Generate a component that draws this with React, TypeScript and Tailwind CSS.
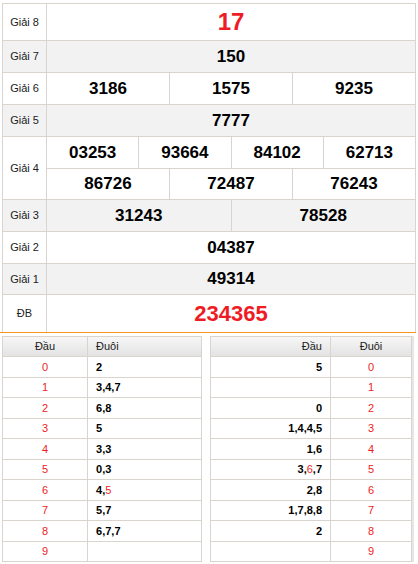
const RED = "text-[#ee1c25]";

type Row = { label: string; lines: string[][]; alt?: boolean; h: string; big?: string };

const rows: Row[] = [
  { label: "Giải 8", lines: [["17"]], h: "h-[37px]", big: "text-[24px]" },
  { label: "Giải 7", lines: [["150"]], alt: true, h: "h-[32px]" },
  { label: "Giải 6", lines: [["3186", "1575", "9235"]], h: "h-[32px]" },
  { label: "Giải 5", lines: [["7777"]], alt: true, h: "h-[32px]" },
  { label: "Giải 4", lines: [["03253", "93664", "84102", "62713"], ["86726", "72487", "76243"]], h: "h-[63px]" },
  { label: "Giải 3", lines: [["31243", "78528"]], alt: true, h: "h-[32px]" },
  { label: "Giải 2", lines: [["04387"]], h: "h-[32px]" },
  { label: "Giải 1", lines: [["49314"]], alt: true, h: "h-[31px]" },
];

// [dau, duoi] ; red digits marked with *
const left: [string, string][] = [
  ["0", "2"],
  ["1", "3,4,7"],
  ["2", "6,8"],
  ["3", "5"],
  ["4", "3,3"],
  ["5", "0,3"],
  ["6", "4,*5"],
  ["7", "5,7"],
  ["8", "6,7,7"],
  ["9", ""],
];

const right: [string, string][] = [
  ["5", "0"],
  ["", "1"],
  ["0", "2"],
  ["1,4,4,5", "3"],
  ["1,6", "4"],
  ["3,*6,7", "5"],
  ["2,8", "6"],
  ["1,7,8,8", "7"],
  ["2", "8"],
  ["", "9"],
];

function Digits({ s }: { s: string }) {
  return (
    <>
      {s.split(",").map((d, i) => (
        <span key={i}>
          {i > 0 && ","}
          {d.startsWith("*") ? <span className={`${RED} font-normal`}>{d.slice(1)}</span> : d}
        </span>
      ))}
    </>
  );
}

function Header({ a, b, rightAlign }: { a: string; b: string; rightAlign?: boolean }) {
  return (
    <div className="flex h-[20px] border-b border-[#d9d4cd] bg-gradient-to-b from-[#f7f7f7] to-[#e3e3e3] text-[11px] text-[#222]">
      {rightAlign ? (
        <>
          <div className="flex w-[120px] items-center justify-end border-r border-[#d9d4cd] pr-[8px]">{a}</div>
          <div className="flex flex-1 items-center justify-center">{b}</div>
        </>
      ) : (
        <>
          <div className="flex w-[85px] items-center justify-center border-r border-[#d9d4cd]">{a}</div>
          <div className="flex flex-1 items-center pl-[8px]">{b}</div>
        </>
      )}
    </div>
  );
}

export default function App() {
  return (
    <div className="w-[418px] bg-white pt-[3px]" style={{ fontFamily: '"Liberation Sans", Arial, sans-serif' }}>
      <div className="w-[416px] border-b border-[#f7941d]">
        <div className="ml-[2px] w-[414px] border-l border-t border-[#d9d4cd]">
          {rows.map((r) => (
            <div key={r.label} className={`flex border-b border-[#d9d4cd] ${r.h} ${r.alt ? "bg-[#f2f2f2]" : "bg-white"}`}>
              <div className="flex w-[44px] shrink-0 items-center justify-center border-r border-[#d9d4cd] text-[11px] text-[#222]">
                {r.label}
              </div>
              <div className="flex flex-1 flex-col">
                {r.lines.map((line, li) => (
                  <div key={li} className={`flex flex-1 ${li < r.lines.length - 1 ? "border-b border-[#d9d4cd]" : ""}`}>
                    {line.map((v) => (
                      <div
                        key={v}
                        className={`flex flex-1 basis-0 items-center justify-center border-r border-[#d9d4cd] font-bold ${
                          r.big ? `${r.big} ${RED}` : "text-[17px] text-black"
                        }`}
                      >
                        {v}
                      </div>
                    ))}
                  </div>
                ))}
              </div>
            </div>
          ))}
          <div className="flex h-[37px] bg-white">
            <div className="flex w-[44px] shrink-0 items-center justify-center border-r border-[#d9d4cd] text-[11px] text-[#222]">
              ĐB
            </div>
            <div className={`flex flex-1 items-center justify-center border-r border-[#d9d4cd] text-[22px] font-bold ${RED}`}>
              234365
            </div>
          </div>
        </div>
      </div>

      <div className="mt-[3px] flex pl-[2px]">
        <div className="w-[200px] border-l border-r border-t border-[#d9d4cd]">
          <Header a="Đầu" b="Đuôi" />
          {left.map(([a, b]) => (
            <div key={a} className="flex h-[20.5px] border-b border-[#d9d4cd] text-[11px]">
              <div className={`flex w-[85px] items-center justify-center border-r border-[#d9d4cd] ${RED}`}>{a}</div>
              <div className="flex flex-1 items-center pl-[8px] font-bold text-black">
                <Digits s={b} />
              </div>
            </div>
          ))}
        </div>
        <div className="ml-[8px] w-[202px] border-l border-r border-t border-[#d9d4cd] shadow-[2px_0_0_#e6e6e6]">
          <Header a="Đầu" b="Đuôi" rightAlign />
          {right.map(([a, b]) => (
            <div key={b} className="flex h-[20.5px] border-b border-[#d9d4cd] text-[11px]">
              <div className="flex w-[120px] items-center justify-end border-r border-[#d9d4cd] pr-[8px] font-bold text-black">
                <Digits s={a} />
              </div>
              <div className={`flex flex-1 items-center justify-center ${RED}`}>{b}</div>
            </div>
          ))}
        </div>
      </div>
    </div>
  );
}
